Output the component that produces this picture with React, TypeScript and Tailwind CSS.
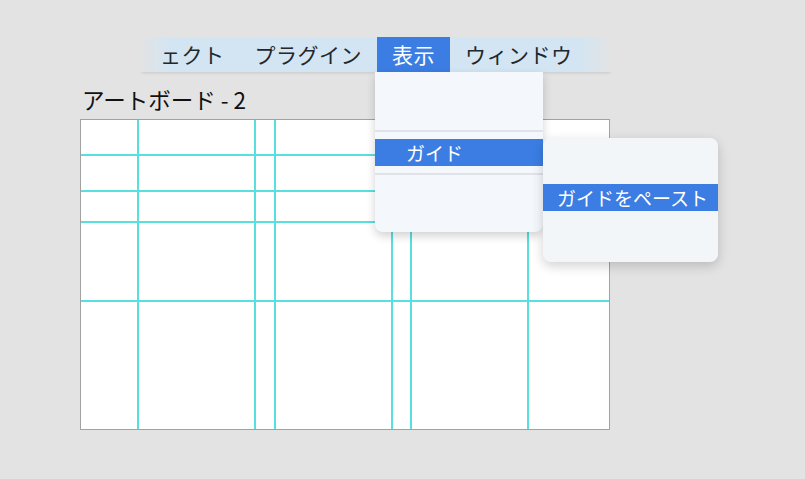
import React from "react";

const vGuides = [56, 173, 193, 310, 329, 446];
const hGuides = [34, 70, 101, 180];

export default function App() {
  return (
    <div className="relative w-[805px] h-[479px] overflow-hidden bg-[#e3e3e3] font-['Noto_Sans_CJK_JP','Noto_Sans',sans-serif] text-[#1c2127]">
      {/* menu bar */}
      <div className="absolute left-[140px] top-[37px] flex h-[35px] w-[472px] items-center pl-[5px] bg-[linear-gradient(90deg,rgba(211,229,242,0),#d3e5f2_6%,#d3e5f2_93%,rgba(211,229,242,0))] shadow-[0_3px_3px_-2px_rgba(0,0,0,0.12)] text-[21px] leading-none tracking-[0.5px] text-[#22272d]">
        <div className="flex h-full items-center px-[15px]">ェクト</div>
        <div className="flex h-full items-center px-[15px]">プラグイン</div>
        <div className="flex h-full items-center px-[15px] bg-[#3b7de2] text-white">表示</div>
        <div className="flex h-full items-center px-[15px]">ウィンドウ</div>
      </div>

      <div className="pl-[82px] pt-[85px] text-[22.5px] leading-[29px] text-[#111]">アートボード - 2</div>

      {/* artboard */}
      <div className="relative ml-[80px] mt-[5px] h-[311px] w-[530px] border border-[#a2a2a2] bg-white">
        {vGuides.map((x) => (
          <div key={"v" + x} className="absolute top-0 bottom-0 w-[2px] bg-[#58dfde]" style={{ left: x }} />
        ))}
        {hGuides.map((y) => (
          <div key={"h" + y} className="absolute left-0 right-0 h-[2px] bg-[#58dfde]" style={{ top: y }} />
        ))}
      </div>

      {/* view menu */}
      <div className="absolute left-[375px] top-[72px] flex h-[160px] w-[168px] flex-col rounded-b-[8px] bg-[#f4f7fb] shadow-[0_4px_10px_rgba(0,0,0,0.18)]">
        <div className="h-[58px]" />
        <div className="h-[2px] bg-[#dfe3e8]" />
        <div className="h-[7px]" />
        <div className="flex h-[27px] items-center bg-[#3b7de2] pl-[31px] text-[19px] leading-none text-white">ガイド</div>
        <div className="h-[7px]" />
        <div className="h-[2px] bg-[#dfe3e8]" />
      </div>

      {/* submenu */}
      <div className="absolute left-[543px] top-[138px] flex h-[124px] w-[175px] flex-col rounded-[8px] bg-[#f3f6f9] shadow-[0_4px_12px_rgba(0,0,0,0.18)]">
        <div className="h-[46px]" />
        <div className="flex h-[27px] items-center bg-[#3b7de2] pl-[14px] text-[19px] leading-none text-white">ガイドをペースト</div>
      </div>
    </div>
  );
}
